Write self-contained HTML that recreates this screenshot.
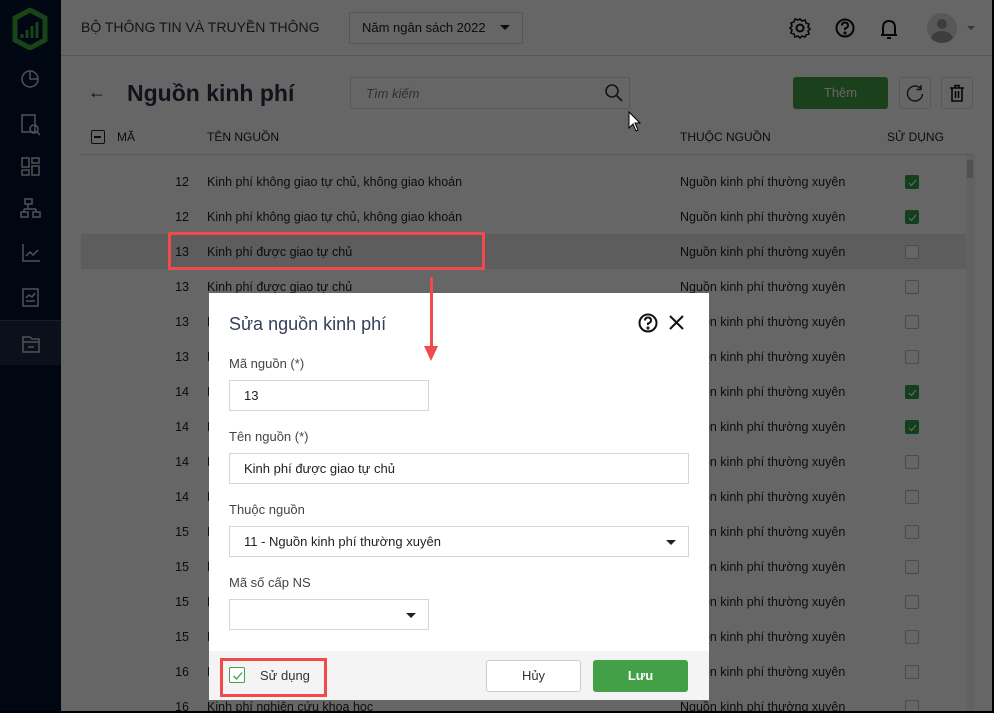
<!DOCTYPE html>
<html><head><meta charset="utf-8">
<style>
*{box-sizing:border-box;margin:0;padding:0}
body{width:994px;height:713px;overflow:hidden;background:#000;font-family:"Liberation Sans",Arial,sans-serif;position:relative}
.abs{position:absolute}
#app{position:absolute;left:0;top:0;width:992px;height:711px;background:#fff;overflow:hidden}
.side{position:absolute;left:0;top:0;width:61px;height:711px;background:#021330}
.main{position:absolute;left:61px;top:0;right:0;bottom:0;background:#fff}
.t{position:absolute;font-size:13px;color:#212121;white-space:nowrap}
.rt{font-size:12.5px}
.cb{position:absolute;width:14px;height:14px;border:1px solid #bbb;border-radius:2px;background:#fff}
.cb.on{background:#2e9e48;border-color:#2e9e48}
#ov{position:absolute;left:0;top:0;width:992px;height:711px;background:rgba(0,0,0,0.6)}
.lbl{position:absolute;left:20px;font-size:13px;color:#444}
.inp{position:absolute;left:20px;height:31px;border:1px solid #d6d6d6;background:#fff;font-size:13px;color:#222;padding-left:14px;line-height:29px}
.caret{position:absolute;right:12px;top:13px;width:0;height:0;border-left:5px solid transparent;border-right:5px solid transparent;border-top:5px solid #222}
</style></head><body>
<div id="app">
 <div class="side">
  <svg class="abs" style="left:12px;top:8px" width="36" height="42" viewBox="0 0 36 42"><path d="M18 2 L33 10 V32 L18 40 L3 32 V10 Z" fill="none" stroke="#3cac3c" stroke-width="5"/><path d="M10 30 V26 M15 30 V22 M20 30 V18 M25 30 V14" stroke="#3cac3c" stroke-width="3"/></svg>
  <svg class="abs" style="left:19px;top:67px" width="24" height="300" viewBox="0 0 24 300" fill="none" stroke="#c8ccd4" stroke-width="1.5">
   <circle cx="11" cy="12" r="8"/><path d="M11 4 V12 H19"/>
   <rect x="3" y="48" width="13" height="17"/><circle cx="15" cy="62" r="4"/><path d="M18 65 L21 68"/>
   <rect x="3" y="91" width="7" height="9"/><rect x="13" y="91" width="7" height="5"/><rect x="3" y="103" width="7" height="5"/><rect x="13" y="99" width="7" height="9"/>
   <rect x="6" y="132" width="7" height="5"/><path d="M9 137 V142 M5 142 H17 M5 142 V145 M17 142 V145"/><rect x="2" y="145" width="7" height="5"/><rect x="14" y="145" width="7" height="5"/>
   <path d="M4 177 V194 H21 M7 189 L11 185 L14 188 L19 183"/>
   <rect x="4" y="222" width="15" height="17"/><path d="M7 231 L10 228 L13 230 L16 226 M7 234 H16"/>
  </svg>
  <div class="abs" style="left:0;top:320px;width:61px;height:1px;background:#3a4a66"></div>
  <div class="abs" style="left:0;top:321px;width:61px;height:44px;background:#1c2a45"></div>
  <svg class="abs" style="left:19px;top:334px" width="24" height="22" viewBox="0 0 24 22" fill="none" stroke="#c8ccd4" stroke-width="1.5"><path d="M4 3 H11 L13 5 H20 V18 H4 Z M4 8 H20 M9 13 H15"/></svg>
 </div>
 <div class="main">
  <div class="t" style="left:20px;top:19px;font-size:14px;color:#333">BỘ THÔNG TIN VÀ TRUYỀN THÔNG</div>
  <div class="abs" style="left:288px;top:12px;width:174px;height:32px;border:1px solid #d6d6d6"></div>
  <div class="t" style="left:301px;top:20px;color:#222">Năm ngân sách 2022</div>
  <div class="abs" style="left:439px;top:25px;border-left:5px solid transparent;border-right:5px solid transparent;border-top:5px solid #222"></div>
  <svg class="abs" style="left:728px;top:16px" width="160" height="24" viewBox="0 0 160 24" fill="none" stroke="#111" stroke-width="2">
   <circle cx="11" cy="12" r="3.5"/><path d="M11 3 L13 5 L16 4 L17 7 L20 8 L19 11 L21 13 L19 15 L20 18 L17 19 L16 21 L13 20 L11 22 L9 20 L6 21 L5 18 L2 17 L3 14 L1 12 L3 10 L2 7 L5 6 L6 3 L9 4 Z" stroke-width="1.6"/>
   <circle cx="56" cy="12" r="8.5"/><path d="M53 9.5 Q53 6.5 56 6.5 Q59 6.5 59 9.5 Q59 11.5 56 12.5 V14" /><circle cx="56" cy="17" r="0.6"/>
   <path d="M94 19 V12 Q94 5 100 5 Q106 5 106 12 V19 M92 19 H108 M98 22 H102"/>
  </svg>
  <div class="abs" style="left:866px;top:13px;width:30px;height:30px;border-radius:50%;background:#ddd;overflow:hidden"><div class="abs" style="left:10px;top:6px;width:10px;height:10px;border-radius:50%;background:#999"></div><div class="abs" style="left:4px;top:18px;width:22px;height:16px;border-radius:50%;background:#999"></div></div>
  <div class="abs" style="left:906px;top:26px;border-left:4px solid transparent;border-right:4px solid transparent;border-top:4px solid #888"></div>
  <div class="abs" style="left:0;top:55px;width:931px;height:1px;background:#ddd"></div>
  <div class="t" style="left:27px;top:82px;font-size:18px;color:#222">←</div>
  <div class="t" style="left:66px;top:80px;font-size:23px;font-weight:bold;color:#2a3442">Nguồn kinh phí</div>
  <div class="abs" style="left:289px;top:77px;width:280px;height:32px;border:1px solid #ddd"></div>
  <div class="t" style="left:305px;top:86px;font-style:italic;color:#777">Tìm kiếm</div>
  <svg class="abs" style="left:543px;top:83px" width="20" height="20" fill="none" stroke="#333" stroke-width="1.6"><circle cx="8" cy="8" r="6"/><path d="M12.5 12.5 L18 18"/></svg>
  <div class="abs" style="left:732px;top:77px;width:95px;height:32px;background:#43a047;border-radius:3px;color:#fff;font-size:13px;text-align:center;line-height:32px">Thêm</div>
  <div class="abs" style="left:838px;top:77px;width:32px;height:32px;border:1px solid #ddd;border-radius:3px"></div>
  <svg class="abs" style="left:844px;top:83px" width="20" height="20" fill="none" stroke="#333" stroke-width="1.5"><path d="M16 6 A7.5 7.5 0 1 0 17.5 11"/><path d="M16 2 V6.5 H11.5"/></svg>
  <div class="abs" style="left:880px;top:77px;width:32px;height:32px;border:1px solid #ddd;border-radius:3px"></div>
  <svg class="abs" style="left:886px;top:83px" width="20" height="20" fill="none" stroke="#111" stroke-width="1.6"><path d="M3 5 H17 M8 5 V2.5 H12 V5 M5 5 V18 H15 V5 M8.5 8 V15 M11.5 8 V15"/></svg>
  <div class="abs" style="left:30px;top:130px;width:14px;height:14px;border:1.5px solid #222;border-radius:2px"><div class="abs" style="left:2px;top:5px;width:7px;height:1.5px;background:#222"></div></div>
  <div class="t" style="left:56px;top:130px;color:#222;font-size:12px">MÃ</div>
  <div class="t" style="left:146px;top:130px;color:#222;font-size:12px">TÊN NGUỒN</div>
  <div class="t" style="left:619px;top:130px;color:#222;font-size:12px">THUỘC NGUỒN</div>
  <div class="t" style="left:826px;top:130px;color:#222;font-size:12px">SỬ DỤNG</div>
  <div class="abs" style="left:20px;top:154px;width:892px;height:1px;background:#ddd"></div>
  <div class="abs" style="left:905px;top:155px;width:9px;height:556px;background:#f4f4f4"></div>
  <div class="abs" style="left:906px;top:160px;width:6px;height:18px;background:#c8c8c8"></div>
  <div class="abs" style="left:20px;top:234px;width:885px;height:35px;background:#e8e8e8"></div>
  <div id="rows"></div>
 </div>
 <div id="ov"></div>
 <div class="abs" style="left:209px;top:293px;width:500px;height:407px;background:#fff">
  <div class="t" style="left:20px;top:21px;font-size:18px;color:#34405a">Sửa nguồn kinh phí</div>
  <svg class="abs" style="left:428px;top:19px" width="50" height="22" fill="none" stroke="#111" stroke-width="2"><circle cx="11" cy="11" r="8.5"/><path d="M8 8.5 Q8 5.5 11 5.5 Q14 5.5 14 8.5 Q14 10.5 11 11.5 V13"/><circle cx="11" cy="16" r="0.6"/><path d="M33 4 L46 17 M46 4 L33 17"/></svg>
  <div class="lbl" style="top:63px">Mã nguồn (*)</div>
  <div class="inp" style="top:87px;width:200px">13</div>
  <div class="lbl" style="top:136px">Tên nguồn (*)</div>
  <div class="inp" style="top:160px;width:460px">Kinh phí được giao tự chủ</div>
  <div class="lbl" style="top:209px">Thuộc nguồn</div>
  <div class="inp" style="top:233px;width:460px">11 - Nguồn kinh phí thường xuyên<div class="caret"></div></div>
  <div class="lbl" style="top:282px">Mã số cấp NS</div>
  <div class="inp" style="top:306px;width:200px"><div class="caret"></div></div>
  <div class="abs" style="left:0;top:358px;width:500px;height:49px;background:#f4f4f4"></div>
  <div class="abs" style="left:20px;top:374px;width:16px;height:16px;border:1px solid #43a047;border-radius:2px;background:#fff"><svg class="abs" style="left:2px;top:2px" width="11" height="11" fill="none" stroke="#43a047" stroke-width="1.3"><path d="M1.5 6 L4.5 9 L10 2.5"/></svg></div>
  <div class="t" style="left:51px;top:375px;color:#333">Sử dụng</div>
  <div class="abs" style="left:277px;top:367px;width:95px;height:32px;border:1px solid #ccc;border-radius:3px;background:#fff;text-align:center;line-height:30px;font-size:13px;color:#333">Hủy</div>
  <div class="abs" style="left:384px;top:367px;width:95px;height:32px;border-radius:3px;background:#43a047;text-align:center;line-height:32px;font-size:13px;color:#fff;font-weight:bold">Lưu</div>
 </div>
 <div class="abs" style="left:168px;top:232px;width:317px;height:38px;border:3px solid #f04a4a"></div>
 <div class="abs" style="left:220px;top:658px;width:107px;height:39px;border:3px solid #f04a4a"></div>
 <div class="abs" style="left:430px;top:277px;width:3px;height:72px;background:#f04a4a"></div>
 <div class="abs" style="left:424px;top:346px;border-left:7.5px solid transparent;border-right:7.5px solid transparent;border-top:15px solid #f04a4a"></div>
 <svg class="abs" style="left:628px;top:111px" width="14" height="22"><path d="M1 1 V17 L5 13 L8 20 L10 19 L7 12 L12 12 Z" fill="#fff" stroke="#000" stroke-width="1"/></svg>
</div>
<script>
var d=[["12","Kinh phí không giao tự chủ, không giao khoán",1],["12","Kinh phí không giao tự chủ, không giao khoán",1],["13","Kinh phí được giao tự chủ",0],["13","Kinh phí được giao tự chủ",0],["13","Kinh phí được giao tự chủ",0],["13","Kinh phí được giao tự chủ",0],["14","Kinh phí không giao tự chủ",1],["14","Kinh phí không giao tự chủ",1],["14","Kinh phí không giao tự chủ",0],["14","Kinh phí không giao tự chủ",0],["15","Kinh phí giao khoán",0],["15","Kinh phí giao khoán",0],["15","Kinh phí giao khoán",0],["15","Kinh phí giao khoán",0],["16","Kinh phí nghiên cứu khoa học",0],["16","Kinh phí nghiên cứu khoa học",0]];
var h="";for(var i=0;i<d.length;i++){var y=175+i*35;
h+='<div class="t rt" style="left:100px;width:28px;text-align:right;top:'+y+'px">'+d[i][0]+'</div>';
h+='<div class="t rt" style="left:146px;top:'+y+'px">'+d[i][1]+'</div>';
h+='<div class="t rt" style="left:619px;top:'+y+'px">Nguồn kinh phí thường xuyên</div>';
h+='<div class="cb'+(d[i][2]?' on':'')+'" style="left:844px;top:'+(y+0)+'px">'+(d[i][2]?'<svg style="position:absolute;left:2px;top:2px" width="9" height="9" fill="none" stroke="#fff" stroke-width="1.2"><path d="M1 5 L3.5 7.5 L8 2"/></svg>':'')+'</div>';}
document.getElementById("rows").innerHTML=h;
</script>
</body></html>
